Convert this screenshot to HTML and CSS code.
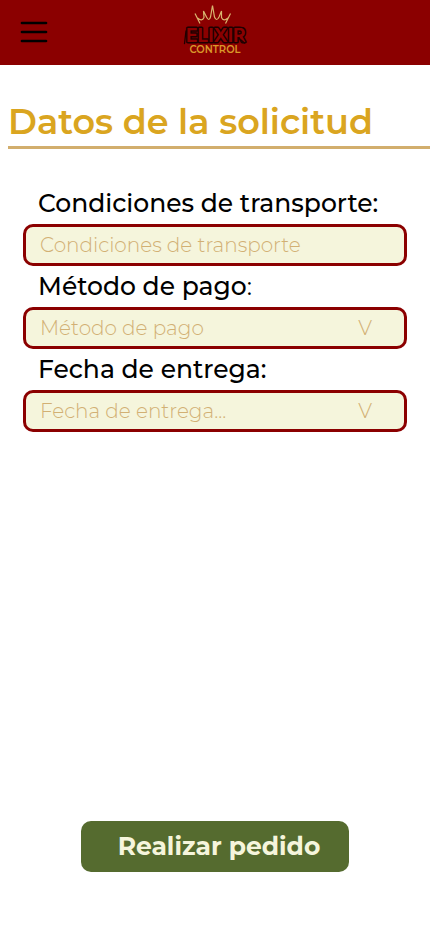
FILE: index.html
```html
<!DOCTYPE html>
<html lang="es">
<head>
  <meta charset="utf-8">
  <meta name="viewport" content="width=device-width, initial-scale=1">
  <title>Datos de la solicitud</title>
  <link rel="stylesheet" href="styles.css">
</head>
<body>
  <header class="topbar">
    <button class="menu" type="button" aria-label="Menú">
      <svg width="28" height="22" viewBox="0 0 28 22" aria-hidden="true">
        <path d="M2 2H26M2 11H26M2 20H26" stroke="#000" stroke-width="2.7" stroke-linecap="round"/>
      </svg>
    </button>
    <svg class="logo" width="66" height="52" viewBox="182 3 66 52" role="img" aria-label="Elixir Control">
      <path class="crown" d="M195 13.500L200 23.500M197.500 18Q202 22 204 17.500L203.500 11L206.500 17Q209 22 210.500 17L212.500 5.500L214.500 17Q216.500 22 219 17L221.500 11L221.500 17.500Q223.500 22 228 18M230.500 13.500L225.500 23.500"/>
      <text class="graffiti" x="186" y="42">ELIXIR</text>
      <path class="drips" d="M186 31L184.500 43.500M241 40L244.500 43"/>
      <text class="control" x="215" y="53" text-anchor="middle">CONTROL</text>
    </svg>
  </header>
  <main class="page">
    <h1 class="title">Datos de la solicitud</h1>
    <form class="form">
      <label class="label" for="transporte">Condiciones de transporte:</label>
      <input class="field" id="transporte" type="text" placeholder="Condiciones de transporte">
      <label class="label" for="pago">Método de pago<span class="colon">:</span></label>
      <div class="picker">
        <select class="field" id="pago"><option>Método de pago</option></select>
        <span class="arrow" aria-hidden="true">V</span>
      </div>
      <label class="label" for="entrega">Fecha de entrega:</label>
      <div class="picker">
        <select class="field" id="entrega"><option>Fecha de entrega...</option></select>
        <span class="arrow" aria-hidden="true">V</span>
      </div>
      <button class="submit" type="submit">Realizar pedido</button>
    </form>
  </main>
</body>
</html>
```
FILE: styles.css
```css
* {
  box-sizing: border-box;
}

body {
  margin: 0;
  min-height: 100vh;
  display: flex;
  flex-direction: column;
  background: #fff;
  color: #000;
  font-family: Montserrat, Inter, sans-serif;
}

.topbar {
  display: grid;
  grid-template-columns: 1fr auto 1fr;
  height: 65px;
  padding: 0 20px;
  background: #8b0000;
}

.menu {
  justify-self: start;
  align-self: center;
  display: flex;
  padding: 0 0 2px;
  border: 0;
  background: none;
}

.logo {
  margin-top: 3px;
}

.crown {
  fill: none;
  stroke: #d9b56f;
  stroke-width: 1.2;
}

.graffiti {
  font-family: Inter, sans-serif;
  font-size: 19px;
  font-weight: 700;
  fill: #8b0000;
  stroke: #200000;
  stroke-width: 3;
  stroke-linejoin: round;
  paint-order: stroke;
}

.drips {
  fill: none;
  stroke: #200000;
  stroke-width: 1.3;
  stroke-linecap: round;
}

.control {
  font-size: 10px;
  font-weight: 600;
  fill: #d9992b;
}

.page {
  flex: 1;
  display: flex;
  flex-direction: column;
  padding-top: 33px;
}

.title {
  margin: 0 0 0 8px;
  border-bottom: 3px solid #d2ae6d;
  color: #daa520;
  font-size: 35px;
  font-weight: 600;
  line-height: 48px;
}

.form {
  flex: 1;
  display: flex;
  flex-direction: column;
  padding: 34px 23px 60px;
}

.label {
  padding: 0 15px;
  font-size: 25px;
  font-weight: 500;
  line-height: 41px;
}

.colon {
  font-weight: 400;
}

.field {
  appearance: none;
  display: block;
  width: 100%;
  height: 42px;
  padding: 0 14px;
  border: 3px solid #8b0000;
  border-radius: 10px;
  background: #f5f5dc;
  color: #d2b074;
  font-family: inherit;
  font-size: 20px;
  font-weight: 300;
}

.field::placeholder {
  color: #d2b074;
  opacity: 1;
}

.picker {
  position: relative;
}

.arrow {
  position: absolute;
  top: 0;
  right: 35px;
  color: #d2b074;
  font-size: 20px;
  font-weight: 300;
  line-height: 42px;
  pointer-events: none;
}

.submit {
  align-self: center;
  width: 70%;
  min-height: 51px;
  margin-top: auto;
  padding: 0 0 2px 8px;
  border: 0;
  border-radius: 10px;
  background: #556b2f;
  color: #f5f5dc;
  font-family: inherit;
  font-size: 25px;
  font-weight: 700;
}
```
